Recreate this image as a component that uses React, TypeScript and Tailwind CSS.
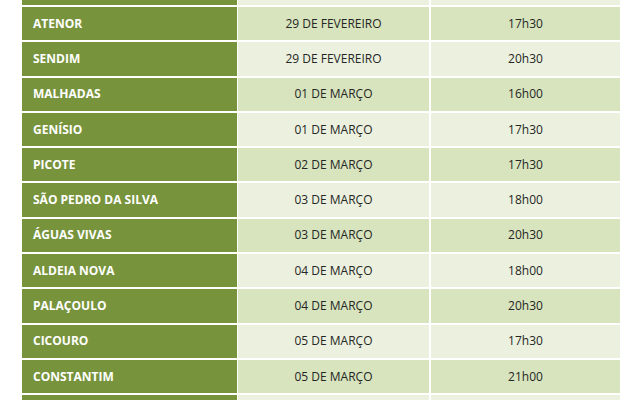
const rows = [
  { place: "ATENOR", date: "29 DE FEVEREIRO", time: "17h30" },
  { place: "SENDIM", date: "29 DE FEVEREIRO", time: "20h30" },
  { place: "MALHADAS", date: "01 DE MARÇO", time: "16h00" },
  { place: "GENÍSIO", date: "01 DE MARÇO", time: "17h30" },
  { place: "PICOTE", date: "02 DE MARÇO", time: "17h30" },
  { place: "SÃO PEDRO DA SILVA", date: "03 DE MARÇO", time: "18h00" },
  { place: "ÁGUAS VIVAS", date: "03 DE MARÇO", time: "20h30" },
  { place: "ALDEIA NOVA", date: "04 DE MARÇO", time: "18h00" },
  { place: "PALAÇOULO", date: "04 DE MARÇO", time: "20h30" },
  { place: "CICOURO", date: "05 DE MARÇO", time: "17h30" },
  { place: "CONSTANTIM", date: "05 DE MARÇO", time: "21h00" },
  { place: "", date: "", time: "" },
];

export default function App() {
  return (
    <div className="h-[400px] w-[640px] overflow-hidden bg-white font-['Open_Sans',sans-serif] text-[12px]">
      <div className="ml-[22px] flex w-[598px] flex-col gap-[2px]">
        {/* previous row, cut off by the top edge */}
        <div className="grid h-[5px] grid-cols-[215px_191px_190px] gap-x-[1px]">
          <div className="bg-[#77933c]" />
          <div className="bg-[#ebf1de]" />
          <div className="ml-[1px] bg-[#ebf1de]" />
        </div>
        {rows.map((r, i) => {
          const dark = i % 2 === 0;
          return (
            <div key={i} className="grid h-[33.3px] grid-cols-[215px_191px_190px] gap-x-[1px]">
              <div className="flex items-center bg-[#77933c] pl-[11px] font-bold text-white">{r.place}</div>
              <div className={`flex items-center justify-center text-[#262626] ${dark ? "bg-[#d7e4bd]" : "bg-[#ebf1de]"}`}>
                {r.date}
              </div>
              <div className={`ml-[1px] flex items-center justify-center text-[#262626] ${dark ? "bg-[#d7e4bd]" : "bg-[#ebf1de]"}`}>
                {r.time}
              </div>
            </div>
          );
        })}
      </div>
    </div>
  );
}
